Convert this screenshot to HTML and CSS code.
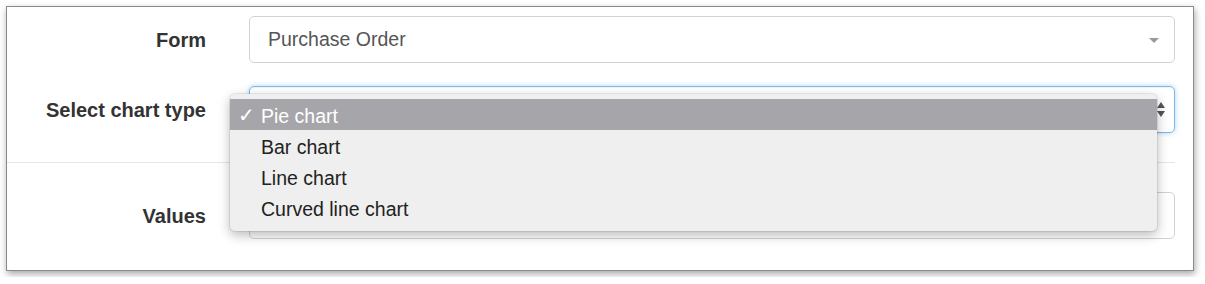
FILE: index.html
```html
<!DOCTYPE html>
<html lang="en">
<head>
<meta charset="utf-8">
<title>Chart settings</title>
<link rel="stylesheet" href="styles.css">
</head>
<body>
<div class="frame">
  <div class="group">
    <label class="lbl">Form</label>
    <div class="field select1">
      <span class="val">Purchase Order</span>
      <svg class="caret" width="10" height="5" viewBox="0 0 10 5"><path d="M0 0 L10 0 L5 5 Z" fill="#999"/></svg>
    </div>
  </div>
  <div class="group g2">
    <label class="lbl">Select chart type</label>
    <div class="field select2">
      <svg class="arrows" width="8" height="15" viewBox="0 0 8 15"><path d="M4 0 L8 6 L0 6 Z M0 9 L8 9 L4 15 Z" fill="#555"/></svg>
      <ul class="menu">
        <li class="item active"><span class="check">✓</span>Pie chart</li>
        <li class="item">Bar chart</li>
        <li class="item">Line chart</li>
        <li class="item">Curved line chart</li>
      </ul>
    </div>
  </div>
  <hr class="divider">
  <div class="group g3">
    <label class="lbl">Values</label>
    <div class="field"></div>
  </div>
</div>
</body>
</html>
```
FILE: styles.css
```css
html, body {
  margin: 0;
  padding: 0;
  background: #fff;
}
body {
  font-family: "Liberation Sans", Arial, sans-serif;
}
.frame {
  margin: 6px;
  width: 1188px;
  height: 265px;
  box-sizing: border-box;
  border: 1px solid #8a8a8a;
  background: #fff;
  box-shadow: 1px 3px 7px rgba(0, 0, 0, 0.35);
  padding: 9px 18px 0 0;
}
.group {
  display: grid;
  grid-template-columns: 242px 926px;
  align-items: center;
}
.g2 { margin-top: 23px; }
.g3 { margin-top: 29px; }
.lbl {
  text-align: right;
  padding-right: 43px;
  padding-top: 1px;
  font-weight: bold;
  font-size: 20px;
  color: #333;
}
.field {
  height: 47px;
  box-sizing: border-box;
  border: 1px solid #d2d2d2;
  border-radius: 5px;
  display: flex;
  align-items: center;
  padding: 0 15px 0 18px;
  position: relative;
  font-size: 19.5px;
  color: #555;
}
.select1 .caret {
  margin-left: auto;
  margin-top: 1px;
}
.select2 {
  z-index: 5;
  border-color: #7db8e8;
  box-shadow: inset 0 1px 1px rgba(0,0,0,.06), 0 0 5px rgba(102,175,233,.55);
  justify-content: flex-end;
  padding-right: 9px;
}
.divider {
  margin: 29px 0 0 0;
  border: 0;
  border-top: 1px solid #e6e6e6;
  height: 0;
}
.menu {
  position: absolute;
  left: -20px;
  top: 7px;
  width: 927px;
  height: 137px;
  box-sizing: border-box;
  margin: 0;
  padding: 5px 0 7px;
  list-style: none;
  background: #efefef;
  border-radius: 5px;
  box-shadow: 0 4px 12px rgba(0,0,0,.28), 0 0 0 1px rgba(0,0,0,.07);
}
.item {
  position: relative;
  height: 31px;
  box-sizing: border-box;
  padding: 3px 0 0 31px;
  line-height: 28px;
  font-size: 19.5px;
  color: #222;
}
.item.active {
  background: #a6a6aa;
  color: #fff;
}
.check {
  position: absolute;
  left: 8px;
  top: 2px;
  font-family: "DejaVu Sans", sans-serif;
  font-size: 20px;
}
```
